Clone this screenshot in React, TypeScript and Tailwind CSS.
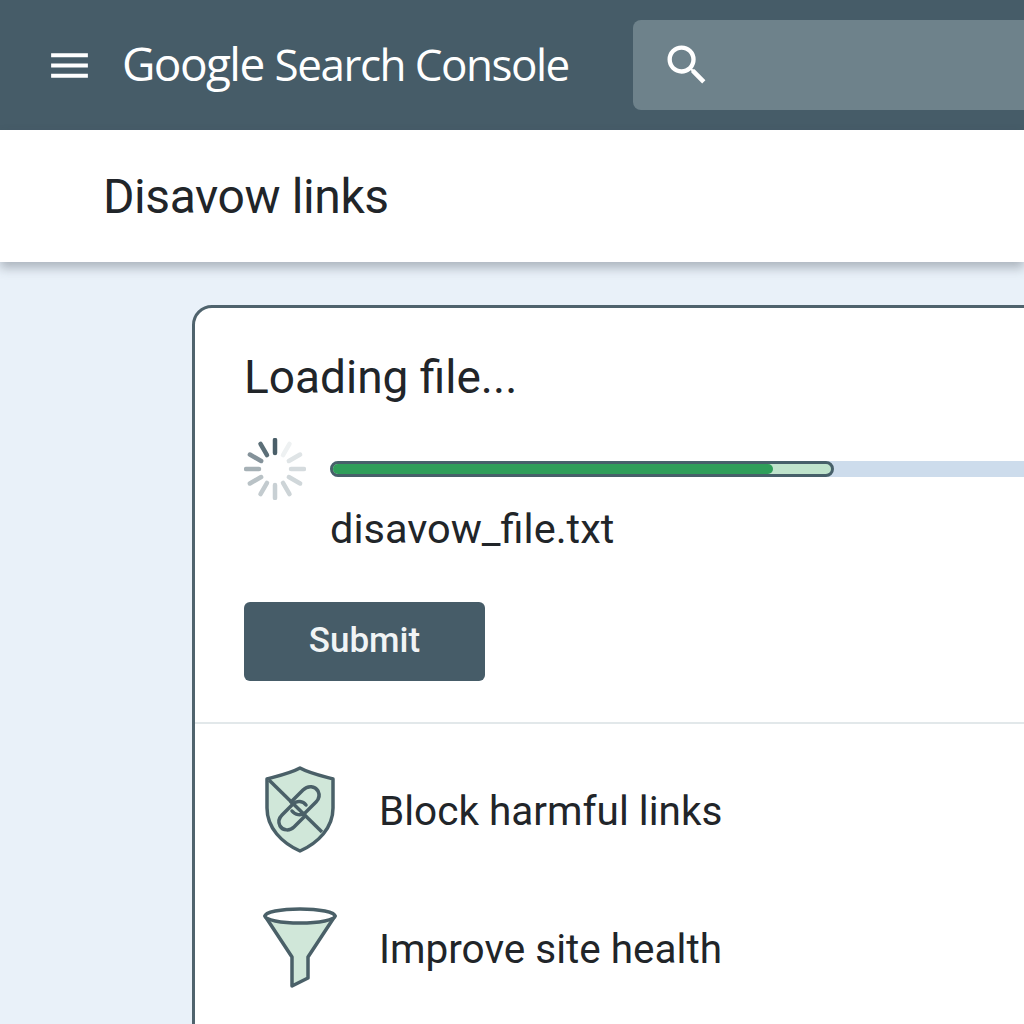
import { MdMenu, MdSearch } from 'react-icons/md';

const SPOKES = [
  { angle: 0, color: '#4a5f69' },
  { angle: 30, color: '#eef1f2' },
  { angle: 60, color: '#dfe4e6' },
  { angle: 90, color: '#d5dbde' },
  { angle: 120, color: '#d0d7da' },
  { angle: 150, color: '#cdd4d7' },
  { angle: 180, color: '#c8d0d4' },
  { angle: 210, color: '#c3cbcf' },
  { angle: 240, color: '#b9c2c6' },
  { angle: 270, color: '#a6b1b6' },
  { angle: 300, color: '#84929a' },
  { angle: 330, color: '#5c6f78' },
];

function Spinner() {
  return (
    <svg width="62" height="62" viewBox="0 0 62 62" className="shrink-0">
      {SPOKES.map((s) => (
        <line
          key={s.angle}
          x1="31"
          y1="2"
          x2="31"
          y2="15"
          stroke={s.color}
          strokeWidth="4.5"
          strokeLinecap="round"
          transform={`rotate(${s.angle} 31 31)`}
        />
      ))}
    </svg>
  );
}

function ShieldIcon() {
  return (
    <svg width="72" height="88" viewBox="0 0 72 88" fill="none">
      <path
        d="M36 2 C27 7 14 10 3 13 L3 42 C3 62 18 77 36 85 C54 77 69 62 69 42 L69 13 C58 10 45 7 36 2 Z"
        fill="#d0e7d9"
        stroke="#4a6068"
        strokeWidth="3.5"
        strokeLinejoin="round"
      />
      <path d="M5 14 L58 66" stroke="#4a6068" strokeWidth="3.5" />
      <path
        d="M33 34 L45 22 C50 17 57 18 60 23 C62 27 61 31 58 34 L47 45 C43 48 37 47 34 43"
        stroke="#4a6068"
        strokeWidth="3.5"
        strokeLinecap="round"
        transform="translate(-6 2)"
      />
      <path
        d="M42 41 C39 37 33 36 29 40 L18 51 C15 54 14 58 16 62 C19 67 26 67 30 63 L41 52"
        stroke="#4a6068"
        strokeWidth="3.5"
        strokeLinecap="round"
        transform="translate(0 -2)"
      />
    </svg>
  );
}

function FunnelIcon() {
  return (
    <svg width="74" height="82" viewBox="0 0 74 82" fill="none">
      <path
        d="M2 9 L29 50 L29 79 L45 71 L45 50 L72 9 C60 16 14 16 2 9 Z"
        fill="#d0e7d9"
        stroke="#4a6068"
        strokeWidth="3.5"
        strokeLinejoin="round"
      />
      <ellipse cx="37" cy="9" rx="35" ry="7" fill="#ffffff" stroke="#4a6068" strokeWidth="3.5" />
    </svg>
  );
}

function Benefit({ icon, label }: { icon: React.ReactNode; label: string }) {
  return (
    <div className="flex items-center h-[88px]">
      <div className="w-[132px] flex justify-center pr-[26px] pb-[3px] shrink-0">{icon}</div>
      <span className="text-[40.5px] leading-none text-[#212529]">{label}</span>
    </div>
  );
}

export default function App() {
  return (
    <div className="w-[1024px] h-[1024px] overflow-hidden bg-[#e9f1f9] font-['Roboto',sans-serif]">
      {/* Top bar */}
      <header className="h-[130px] bg-[#465c68] flex items-center pl-[45px]">
        <MdMenu className="w-[49px] h-[49px] text-white shrink-0" />
        <div className="ml-[28px] w-[511px] shrink-0 pb-[3px] flex items-baseline text-white font-['Open_Sans',sans-serif] whitespace-nowrap">
          <span className="text-[46px] tracking-[-1.6px]">Google</span>
          <span className="ml-[11px] text-[44px] tracking-[-1.5px]">Search Console</span>
        </div>
        <div className="flex-1 h-[90px] rounded-l-lg bg-[#6e828b] flex items-center pl-[28px]">
          <MdSearch className="w-[52px] h-[52px] text-white" />
        </div>
      </header>

      {/* Page title */}
      <div className="relative h-[132px] bg-white flex items-center pl-[103px] pt-[2px] shadow-[0_6px_10px_rgba(60,70,80,0.35)]">
        <h1 className="text-[48px] leading-none tracking-[-0.4px] text-[#212529]">Disavow links</h1>
      </div>

      {/* Card */}
      <div className="ml-[192px] mt-[43px] w-[900px] h-[760px] bg-white border-[3px] border-[#4f636d] rounded-tl-[20px]">
        <div className="pl-[49px] pt-[43px]">
          <h2 className="text-[46px] leading-[52px] text-[#212529]">Loading file...</h2>
          <div className="mt-[35px] flex items-center h-[62px]">
            <Spinner />
            <div className="ml-[24px] flex-1 h-[16px] bg-[#cddcec] rounded-l-full">
              <div className="w-[504px] h-[16px] rounded-full border-[3px] border-[#47606a] bg-[#bfe3cc] overflow-hidden">
                <div className="w-[440px] h-full rounded-r-full bg-[#2f9e5a]" />
              </div>
            </div>
          </div>
          <div className="ml-[86px] mt-[5px] text-[41.5px] leading-[48px] text-[#212529]">disavow_file.txt</div>
          <button className="mt-[49px] w-[241px] h-[79px] rounded-md bg-[#465c68] text-[#f1f4f5] text-[35px] font-medium">
            Submit
          </button>
        </div>
        <div className="mt-[41px] border-t-2 border-[#e2e8ea] pl-[52px] pt-[43px] flex flex-col gap-[50px]">
          <Benefit icon={<ShieldIcon />} label="Block harmful links" />
          <Benefit icon={<FunnelIcon />} label="Improve site health" />
        </div>
      </div>
    </div>
  );
}
